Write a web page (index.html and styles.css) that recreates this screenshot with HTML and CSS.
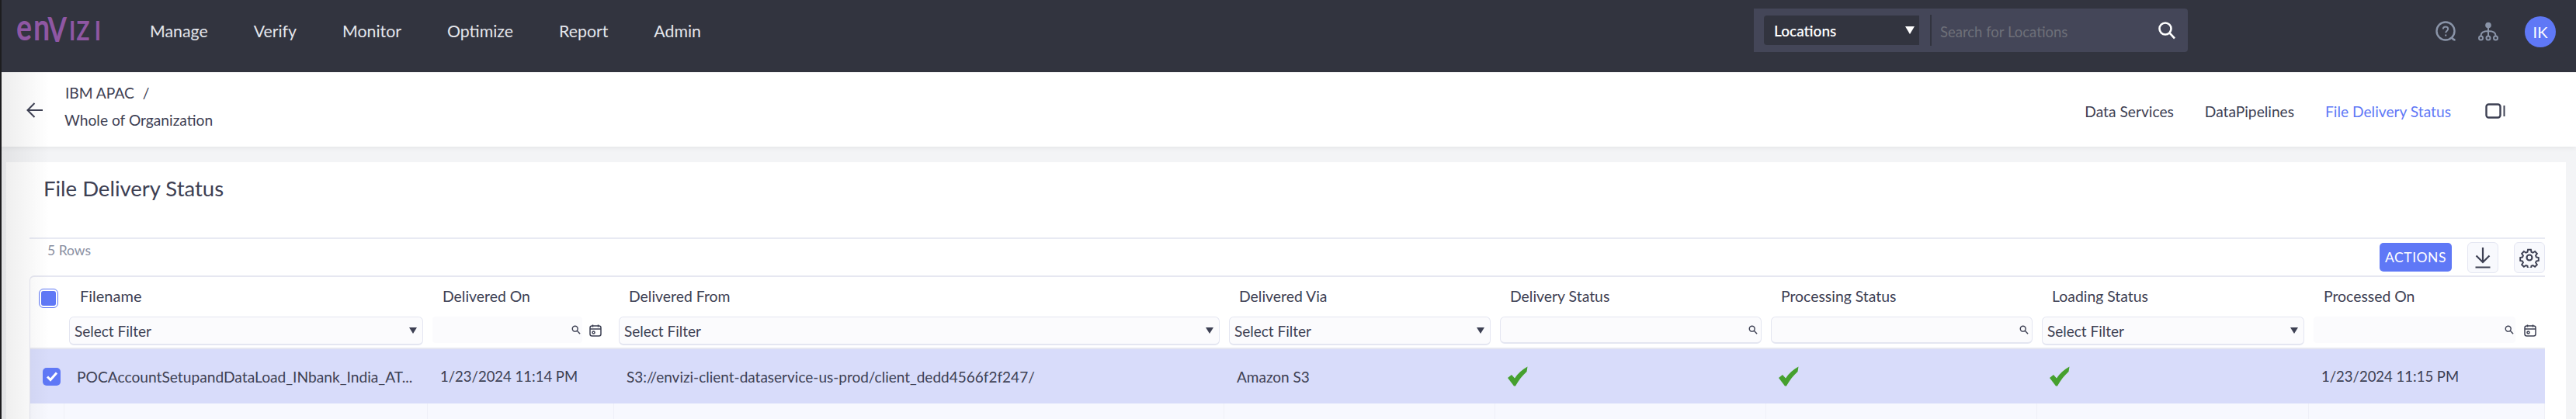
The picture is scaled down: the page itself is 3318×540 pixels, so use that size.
FILE: index.html
```html
<!DOCTYPE html>
<html lang="en">

<head>
    <meta charset="UTF-8">
    <title>File Delivery Status</title>
    <link rel="stylesheet" href="styles.css">
</head>

<body>

    <!-- Top bar -->
    <header class="topbar">
        <svg class="logo" width="172" height="80" viewBox="0 0 172 80">
            <text transform="translate(6 8) scale(.8 1)" y="44" font-size="47" x="0 27.500">en<tspan font-size="44" x="50.500" y="46">V</tspan><tspan font-size="35" x="85 97 126" y="44">IZI</tspan></text>
        </svg>
        <nav class="menu">
            <a>Manage</a>
            <a>Verify</a>
            <a>Monitor</a>
            <a>Optimize</a>
            <a>Report</a>
            <a>Admin</a>
        </nav>
        <div class="search">
            <div class="search-type">
                <span>Locations</span>
                <i class="caret caret-white"></i>
            </div>
            <div class="search-line"></div>
            <div class="search-text">Search for Locations</div>
            <svg class="search-icon" width="24" height="24" viewBox="0 0 24 24" fill="none" stroke="#fff" stroke-width="2.6">
                <circle cx="10" cy="10" r="7.5"/>
                <path d="M15.5 15.5L22 22.5"/>
            </svg>
        </div>
        <div class="top-icons">
            <svg width="28" height="28" viewBox="0 0 28 28" fill="none" stroke="#8a94a8" stroke-width="2.4">
                <circle cx="13" cy="13" r="11.500"/>
                <path d="M21 21.500c1 1.500 2 3 4.500 3"/>
                <path d="M9.800 10.500C9.800 8.500 11.200 7.500 13 7.500C14.800 7.500 16.200 8.700 16.200 10.300C16.200 12.500 13.200 12.800 13.200 15.200" stroke-width="2"/>
                <path d="M13.200 17.500v2" stroke-width="2.200"/>
            </svg>
            <svg width="26" height="26" viewBox="0 0 26 26" fill="none" stroke="#8a94a8" stroke-width="2">
                <circle cx="13" cy="4.500" r="3.800" fill="#8a94a8" stroke="none"/>
                <path d="M13 8v10M3.500 18c0-4 4-6 9.500-6s9.500 2 9.500 6"/>
                <circle cx="3.500" cy="21" r="2.500"/>
                <circle cx="13" cy="21" r="2.500"/>
                <circle cx="22.500" cy="21" r="2.500"/>
            </svg>
            <div class="avatar">IK</div>
        </div>
    </header>

    <!-- Breadcrumb and tabs -->
    <div class="subbar">
        <svg class="back" width="22" height="20" viewBox="0 0 22 20" fill="none" stroke="#3d4053" stroke-width="2">
            <path d="M21 10H2M10.500 1L1.500 10l9 9"/>
        </svg>
        <div class="crumbs">
            <div class="crumb-top">IBM APAC <span class="slash">/</span></div>
            <div class="crumb-org">Whole of Organization</div>
        </div>
        <div class="tabs">
            <a>Data Services</a>
            <a>DataPipelines</a>
            <a class="active">File Delivery Status</a>
            <svg class="tab-icon" width="26" height="20" viewBox="0 0 26 20" fill="none" stroke="#3d4053" stroke-width="2.400">
                <rect x="1.500" y="1.500" width="18" height="17" rx="3"/>
                <path d="M24.500 3v14" stroke-width="2"/>
            </svg>
        </div>
    </div>

    <!-- Card -->
    <main class="card">
        <h1>File Delivery Status</h1>

        <div class="toolbar">
            <span class="rows-count">5 Rows</span>
            <button class="btn-actions">ACTIONS</button>
            <button class="btn-icon">
                <svg width="22" height="28" viewBox="0 0 22 28" fill="none" stroke="#3d4053" stroke-width="2.200">
                    <path d="M11 1v18M2.500 11.500L11 20l8.500-8.500M1.500 26.500h19"/>
                </svg>
            </button>
            <button class="btn-icon">
                <svg width="26" height="26" viewBox="0 0 24 24" fill="none" stroke="#3d4053" stroke-width="2">
                    <circle cx="12" cy="12" r="3.200"/>
                    <path d="M10 1.500h4l.6 3.200 2 .9 2.700-1.800 2.800 2.900-1.800 2.700.8 2 3 .6v4l-3 .6-.8 2 1.800 2.700-2.800 2.800-2.700-1.800-2 .8-.6 3h-4l-.6-3-2-.8-2.700 1.800-2.800-2.800 1.800-2.700-.8-2-3-.6v-4l3-.6.8-2-1.800-2.700 2.800-2.900 2.700 1.800 2-.9z" transform="translate(1.200 1.200) scale(.9)"/>
                </svg>
            </button>
        </div>

        <div class="grid">
            <div class="tr tr-head">
                <div class="th"><i class="check check-head"></i></div>
                <div class="th th-name">Filename</div>
                <div class="th">Delivered On</div>
                <div class="th">Delivered From</div>
                <div class="th">Delivered Via</div>
                <div class="th">Delivery Status</div>
                <div class="th">Processing Status</div>
                <div class="th">Loading Status</div>
                <div class="th">Processed On</div>
            </div>

            <div class="tr tr-filter">
                <div></div>
                <div class="fc"><div class="select">Select Filter<i class="caret"></i></div></div>
                <div class="fc"><div class="date"><svg class="mini-search" width="12" height="12" viewBox="0 0 14 14" fill="none" stroke="#3d4053" stroke-width="1.700"><circle cx="5.500" cy="5.500" r="4"/><path d="M8.500 8.500L13 13"/></svg></div><svg class="cal" width="16" height="16" viewBox="0 0 16 16" fill="none" stroke="#3d4053" stroke-width="1.500"><rect x="1" y="2" width="14" height="13" rx="2.500"/><path d="M1 6h14M4.500 .5v3M11.500 .5v3"/><circle cx="5.500" cy="10.500" r="1.500"/></svg></div>
                <div class="fc"><div class="select">Select Filter<i class="caret"></i></div></div>
                <div class="fc"><div class="select">Select Filter<i class="caret"></i></div></div>
                <div class="fc"><div class="input"><svg class="mini-search" width="12" height="12" viewBox="0 0 14 14" fill="none" stroke="#3d4053" stroke-width="1.700"><circle cx="5.500" cy="5.500" r="4"/><path d="M8.500 8.500L13 13"/></svg></div></div>
                <div class="fc"><div class="input"><svg class="mini-search" width="12" height="12" viewBox="0 0 14 14" fill="none" stroke="#3d4053" stroke-width="1.700"><circle cx="5.500" cy="5.500" r="4"/><path d="M8.500 8.500L13 13"/></svg></div></div>
                <div class="fc"><div class="select">Select Filter<i class="caret"></i></div></div>
                <div class="fc fc-last"><div class="date"><svg class="mini-search" width="12" height="12" viewBox="0 0 14 14" fill="none" stroke="#3d4053" stroke-width="1.700"><circle cx="5.500" cy="5.500" r="4"/><path d="M8.500 8.500L13 13"/></svg></div><svg class="cal" width="16" height="16" viewBox="0 0 16 16" fill="none" stroke="#3d4053" stroke-width="1.500"><rect x="1" y="2" width="14" height="13" rx="2.500"/><path d="M1 6h14M4.500 .5v3M11.500 .5v3"/><circle cx="5.500" cy="10.500" r="1.500"/></svg></div>
            </div>

            <div class="tr tr-data">
                <div class="td td-check">
                    <i class="check check-on">
                        <svg width="16" height="14" viewBox="0 0 16 14" fill="none" stroke="#fff" stroke-width="3"><path d="M2 7.500l4 4 8-9"/></svg>
                    </i>
                </div>
                <div class="td td-name">POCAccountSetupandDataLoad_INbank_India_AT...</div>
                <div class="td td-date">1/23/2024 11:14 PM</div>
                <div class="td">S3://envizi-client-dataservice-us-prod/client_dedd4566f2f247/</div>
                <div class="td">Amazon S3</div>
                <div class="td"><svg width="26" height="26" viewBox="0 0 26 26"><path d="M0 15L5 11L9 15.500C13 9 19 4 25.500 .5L24.500 7C19 12 14 18 10 25.500H8Z" fill="#45a02e"/></svg></div>
                <div class="td"><svg width="26" height="26" viewBox="0 0 26 26"><path d="M0 15L5 11L9 15.500C13 9 19 4 25.500 .5L24.500 7C19 12 14 18 10 25.500H8Z" fill="#45a02e"/></svg></div>
                <div class="td"><svg width="26" height="26" viewBox="0 0 26 26"><path d="M0 15L5 11L9 15.500C13 9 19 4 25.500 .5L24.500 7C19 12 14 18 10 25.500H8Z" fill="#45a02e"/></svg></div>
                <div class="td td-date">1/23/2024 11:15 PM</div>
            </div>

            <div class="tr tr-empty">
                <div></div><div></div><div></div><div></div><div></div><div></div><div></div><div></div><div></div>
            </div>
        </div>
    </main>

    <div class="side-shade"></div>

</body>

</html>
```

FILE: styles.css
```css
* {
    box-sizing: border-box;
}

html,
body {
    height: 540px;
    overflow: hidden;
}

body {
    margin: 0;
    padding-left: 2px;
    background-color: #f3f4f6;
    font-family: Lato, "Noto Sans", Arial, sans-serif;
    color: #3d4053;
    display: flex;
    flex-direction: column;
    box-shadow: inset 2px 0 0 #1d1d1f;
}

/* top bar */
.topbar {
    display: flex;
    align-items: flex-start;
    height: 93px;
    flex-shrink: 0;
    background-color: #32343f;
    padding-left: 13px;
    color: #fff;
}

.logo {
    flex-shrink: 0;
    margin-right: 6px;
    fill: #8f57a3;
    font-family: Lato, sans-serif;
    font-weight: 700;
}

.menu {
    display: flex;
    gap: 59px;
    height: 79px;
    align-items: center;
    font-size: 21.300px;
    color: #e4e6ec;
}

.search {
    display: flex;
    align-items: center;
    position: relative;
    width: 559px;
    height: 56px;
    margin-top: 11px;
    margin-left: 1356px;
    padding-left: 13px;
    background-color: #444658;
    border-radius: 0 4px 4px 0;
}

.search-type {
    display: flex;
    align-items: center;
    justify-content: space-between;
    width: 200px;
    height: 38px;
    padding: 0 6px 0 13px;
    background-color: #32343f;
    border-radius: 4px 0 0 4px;
    font-size: 19px;
    font-weight: 600;
}

.search-line {
    width: 2px;
    height: 40px;
    margin: 0 11px 0 14px;
    background-color: #32343f;
}

.search-text {
    flex: 1;
    padding-top: 4px;
    font-size: 18.500px;
    color: #6e7079;
}

.search-icon {
    margin-right: 15px;
}

.caret {
    display: inline-block;
    width: 0;
    height: 0;
    border-left: 5px solid transparent;
    border-right: 5px solid transparent;
    border-top: 8px solid #3d4053;
}

.caret-white {
    border-left-width: 6px;
    border-right-width: 6px;
    border-top: 10px solid #fff;
}

.top-icons {
    display: flex;
    align-items: center;
    height: 82px;
    margin-left: 319px;
    gap: 27px;
}

.avatar {
    width: 40px;
    height: 40px;
    margin-left: 7px;
    border-radius: 50%;
    background-color: #5f78f6;
    color: #fff;
    font-size: 20px;
    line-height: 40px;
    text-align: center;
}

/* breadcrumb */
.subbar {
    display: flex;
    align-items: center;
    flex-shrink: 0;
    height: 96px;
    padding-left: 32px;
    background-color: #fff;
    box-shadow: 0 2px 6px rgba(0, 0, 0, 0.06);
    position: relative;
}

.back {
    margin-top: 1px;
}

.crumbs {
    margin-left: 27px;
    margin-bottom: 8px;
    font-size: 19.200px;
    line-height: 26px;
}

.crumb-top {
    margin-left: 1px;
    margin-bottom: 9px;
}

.slash {
    margin-left: 6px;
}

.tabs {
    display: flex;
    align-items: center;
    gap: 40px;
    margin-top: 4px;
    margin-left: auto;
    margin-right: 91px;
    font-size: 19.200px;
}

.tabs .active {
    color: #5f78f6;
}

.tab-icon {
    margin-left: 4px;
}

/* card */
.card {
    flex: 1;
    margin: 20px 13px 0 6px;
    padding: 0 27px 0 30px;
    background-color: #fff;
}

.card h1 {
    margin: 0;
    height: 97px;
    padding: 16px 0 0 18px;
    font-size: 27.500px;
    line-height: 36px;
    font-weight: 400;
}

.toolbar {
    display: flex;
    align-items: center;
    height: 49px;
    padding-left: 23px;
    border-top: 2px solid #e8eaf3;
}

.rows-count {
    align-self: flex-start;
    margin-top: 4px;
    margin-right: auto;
    font-size: 17.500px;
    color: #8a90a2;
}

.btn-actions {
    width: 93px;
    height: 37px;
    margin-right: 20px;
    border: none;
    border-radius: 5px;
    background-color: #5f78f6;
    color: #fff;
    font-family: inherit;
    font-size: 17.500px;
    letter-spacing: 0.5px;
    padding: 0;
}

.btn-icon {
    display: flex;
    align-items: center;
    justify-content: center;
    width: 40px;
    height: 40px;
    margin-left: 0;
    padding: 0;
    border: 1px solid #e4e6f2;
    border-radius: 6px;
    background-color: #f8f9fd;
}

.btn-icon + .btn-icon {
    margin-left: 20px;
}

/* table */
.grid {
    border-top: 2px solid #e6e7f1;
    border-top-left-radius: 6px;
    border-left: 1px solid #e6e7f1;
    font-size: 19.400px;
}

.tr {
    display: grid;
    grid-template-columns: 44px 468px 240px 786px 349px 349px 349px 350px 304px;
}

.tr-head {
    height: 51px;
}

.th {
    display: flex;
    align-items: center;
    padding-left: 19px;
    padding-bottom: 3px;
}

.th-name {
    padding-left: 20px;
    font-size: 20px;
}

.th:first-child {
    padding: 3px 0 0 12px;
}

.td-check {
    padding-left: 12px;
}

.check {
    display: flex;
    align-items: center;
    justify-content: center;
    width: 23px;
    height: 23px;
}

.check-head {
    background-color: #5f78f6;
    border: 2px solid #fff;
    border-radius: 5px;
    outline: 1px solid #5f78f6;
}

.check-on {
    background-color: #5f78f6;
    border-radius: 5px;
}

.tr-filter {
    height: 42px;
    border-bottom: 2px solid #e6e7f1;
}

.fc {
    display: flex;
    align-items: flex-start;
    padding: 0 6px;
}

.select {
    display: flex;
    align-items: center;
    justify-content: space-between;
    width: 100%;
    height: 37px;
    padding: 0 7px 0 6px;
    background-color: #fbfbfd;
    border: 1px solid #e4e6f1;
    border-bottom-width: 2px;
    border-radius: 6px;
    font-size: 19px;
}

.input {
    display: flex;
    align-items: center;
    justify-content: flex-end;
    width: 100%;
    height: 35px;
    padding-right: 4px;
    background-color: #fbfbfd;
    border: 1px solid #e4e6f1;
    border-bottom-width: 2px;
    border-radius: 6px;
}

.date {
    display: flex;
    align-items: center;
    justify-content: flex-end;
    flex: 1;
    height: 34px;
    padding-right: 2px;
    background-color: #fbfbfd;
    border-radius: 4px;
}

.cal {
    margin: 10px 10px 0 9px;
}

.fc-last .cal {
    margin: 10px 5px 0 11px;
}

.tr-data {
    height: 70px;
    background-color: #d8dcfa;
    font-size: 19px;
}

.td {
    display: flex;
    align-items: center;
    min-width: 0;
    padding-left: 16px;
    white-space: nowrap;
}

.td-name {
    font-size: 19.200px;
}

.td-date {
    font-size: 18.500px;
}

.tr-empty {
    height: 30px;
    background-color: #f7f8fe;
}

.tr-empty > div {
    border-right: 1px solid #eff0f8;
}

.side-shade {
    position: absolute;
    left: 2px;
    top: 93px;
    width: 62px;
    height: 447px;
    background: linear-gradient(to right, rgba(0, 0, 0, 0.07), rgba(0, 0, 0, 0));
    pointer-events: none;
}
```
